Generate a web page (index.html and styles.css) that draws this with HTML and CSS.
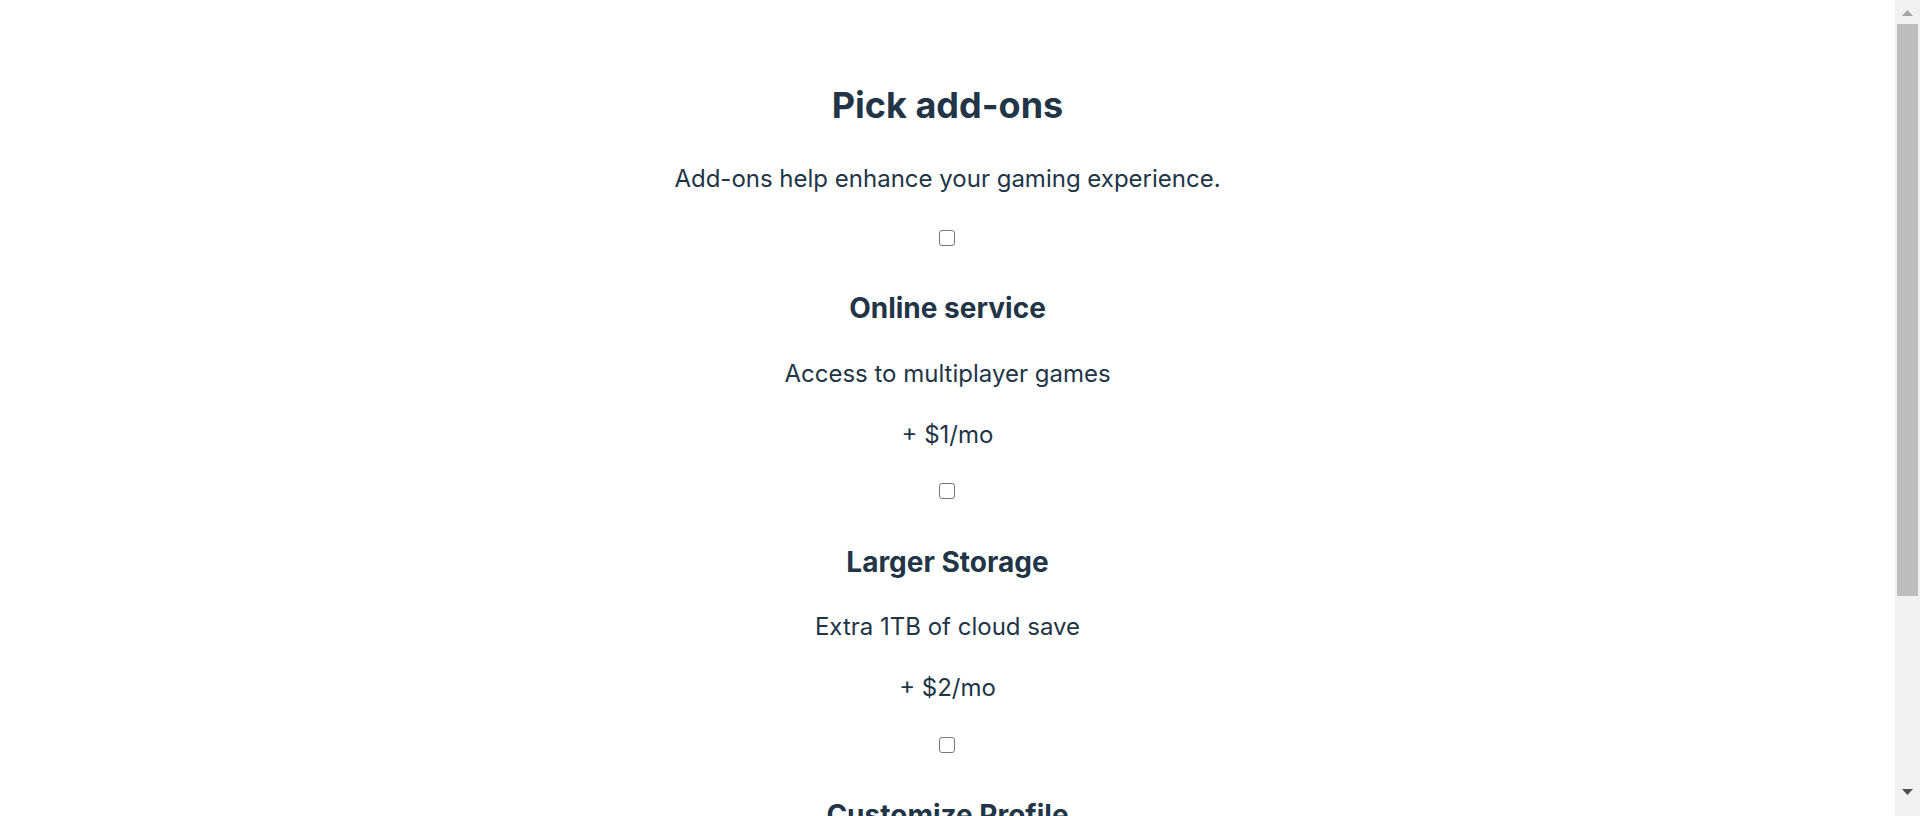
FILE: index.html
```html
<!DOCTYPE html>
<html lang="en">
<head>
<meta charset="utf-8">
<title>Pick add-ons</title>
<link rel="stylesheet" href="styles.css">
</head>
<body>
<main class="page">
  <h1 class="title">Pick add-ons</h1>
  <p class="subtitle">Add-ons help enhance your gaming experience.</p>
  <section class="addon">
    <input class="addon-check" type="checkbox">
    <h3 class="addon-name">Online service</h3>
    <p class="addon-desc">Access to multiplayer games</p>
    <p class="addon-price">+ $1/mo</p>
  </section>
  <section class="addon">
    <input class="addon-check" type="checkbox">
    <h3 class="addon-name">Larger Storage</h3>
    <p class="addon-desc">Extra 1TB of cloud save</p>
    <p class="addon-price">+ $2/mo</p>
  </section>
  <section class="addon">
    <input class="addon-check" type="checkbox">
    <h3 class="addon-name">Customize Profile</h3>
    <p class="addon-desc">Custom theme on your profile</p>
    <p class="addon-price">+ $2/mo</p>
  </section>
</main>
<div class="scrollbar" aria-hidden="true">
  <div class="scroll-arrow scroll-arrow-up">
    <svg width="11" height="6" viewBox="0 0 11 6"><path d="M5.5 0 L11 6 L0 6 Z" fill="#a3a3a3"/></svg>
  </div>
  <div class="scroll-track">
    <div class="scroll-thumb"></div>
  </div>
  <div class="scroll-arrow scroll-arrow-down">
    <svg width="11" height="6" viewBox="0 0 11 6"><path d="M0 0 L11 0 L5.5 6 Z" fill="#505050"/></svg>
  </div>
</div>
</body>
</html>
```

FILE: styles.css
```css
html, body {
  margin: 0;
  padding: 0;
  background: #ffffff;
}

html {
  overflow: hidden;
}

body {
  font-family: Inter, "Noto Sans", "Liberation Sans", sans-serif;
  color: #213547;
}

.page {
  display: flex;
  flex-direction: column;
  align-items: center;
  text-align: center;
  padding: 83px 25px 130px 0;
}

.title {
  margin: 0;
  font-size: 36px;
  line-height: 44px;
  font-weight: 700;
}

.subtitle {
  margin: 34px 0 0;
  font-size: 24px;
  line-height: 36px;
  font-weight: 400;
}

.addon {
  display: flex;
  flex-direction: column;
  align-items: center;
}

.addon-check {
  appearance: none;
  -webkit-appearance: none;
  display: block;
  box-sizing: border-box;
  width: 16px;
  height: 16px;
  margin: 32.5px 0 0 -1px;
  border: 1.5px solid #767676;
  border-radius: 3px;
  background: #ffffff;
}

.addon + .addon .addon-check {
  margin-top: 30.5px;
}

.addon-name {
  margin: 42.5px 0 0;
  font-size: 28px;
  line-height: 40px;
  font-weight: 700;
}

.addon-desc {
  margin: 27.5px 0 0;
  font-size: 24px;
  line-height: 36px;
}

.addon-price {
  margin: 25px 0 0;
  font-size: 24px;
  line-height: 36px;
}

.scrollbar {
  position: fixed;
  top: 0;
  right: 0;
  width: 25px;
  height: 100vh;
  background: #f1f1f1;
  display: flex;
  flex-direction: column;
}

.scroll-arrow {
  height: 24px;
  display: flex;
  align-items: center;
  justify-content: center;
}

.scroll-arrow-up {
  align-items: flex-start;
  padding-top: 10px;
  box-sizing: border-box;
}

.scroll-arrow-down {
  align-items: flex-end;
  padding-bottom: 21px;
  height: 220px;
  box-sizing: border-box;
}

.scroll-track {
  flex: 1;
  display: flex;
  flex-direction: column;
}

.scroll-thumb {
  height: 572px;
  margin: 0 2px;
  background: #bebebe;
}
```
